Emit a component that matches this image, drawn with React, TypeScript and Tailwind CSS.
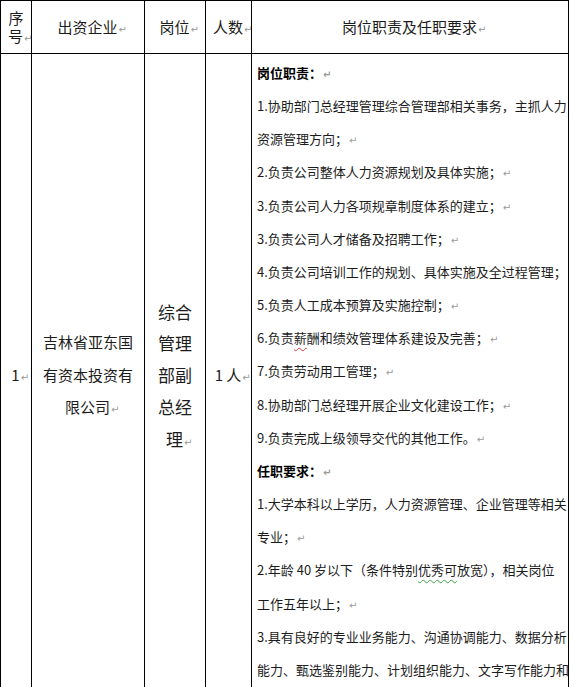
import React from "react";

const Mark = () => (
  <span className="inline-block w-0 whitespace-nowrap pl-[1px] align-baseline text-[10px] leading-none text-[#9a9a9a] font-['DejaVu_Sans',sans-serif]">
    ↵
  </span>
);

type Line = { text: React.ReactNode; bold?: boolean; mark?: boolean };

const lines: Line[] = [
  { text: "岗位职责：", bold: true, mark: true },
  { text: "1.协助部门总经理管理综合管理部相关事务，主抓人力" },
  { text: "资源管理方向；", mark: true },
  { text: "2.负责公司整体人力资源规划及具体实施；", mark: true },
  { text: "3.负责公司人力各项规章制度体系的建立；", mark: true },
  { text: "3.负责公司人才储备及招聘工作；", mark: true },
  { text: "4.负责公司培训工作的规划、具体实施及全过程管理；", mark: true },
  { text: "5.负责人工成本预算及实施控制；", mark: true },
  {
    text: (
      <>
        6.负责
        <span className="underline decoration-wavy decoration-[#d83a3a] decoration-1 underline-offset-[4px]">薪</span>
        酬和绩效管理体系建设及完善；
      </>
    ),
    mark: true,
  },
  { text: "7.负责劳动用工管理；", mark: true },
  { text: "8.协助部门总经理开展企业文化建设工作；", mark: true },
  { text: "9.负责完成上级领导交代的其他工作。", mark: true },
  { text: "任职要求：", bold: true, mark: true },
  { text: "1.大学本科以上学历，人力资源管理、企业管理等相关" },
  { text: "专业；", mark: true },
  {
    text: (
      <>
        2.年龄 40 岁以下（条件特别
        <span className="underline decoration-wavy decoration-[#3fa34d] decoration-1 underline-offset-[4px]">优秀可</span>
        放宽），相关岗位
      </>
    ),
  },
  { text: "工作五年以上；", mark: true },
  { text: "3.具有良好的专业业务能力、沟通协调能力、数据分析" },
  { text: "能力、甄选鉴别能力、计划组织能力、文字写作能力和" },
  { text: "语言表达能力；", mark: true },
];

export default function App() {
  return (
    <div className="min-h-screen bg-white font-['Noto_Sans_CJK_SC',sans-serif] text-[#1c1c1c]">
      <div className="grid w-[569px] grid-cols-[31px_113px_61px_46px_317px] border-l border-t border-black">
        {/* Header row */}
        <div className="flex h-[53px] flex-col items-center justify-center border-b border-r border-black text-[15px] leading-[18px]">
          <span>序</span>
          <span>
            号<Mark />
          </span>
        </div>
        <div className="flex h-[53px] items-center justify-center border-b border-r border-black text-[15px]">
          <span className="whitespace-nowrap">
            出资企业<Mark />
          </span>
        </div>
        <div className="flex h-[53px] items-center justify-center border-b border-r border-black text-[15px]">
          <span className="whitespace-nowrap">
            岗位<Mark />
          </span>
        </div>
        <div className="flex h-[53px] items-center justify-center border-b border-r border-black text-[15px]">
          <span className="whitespace-nowrap">
            人数<Mark />
          </span>
        </div>
        <div className="flex h-[53px] items-center justify-center border-b border-r border-black text-[15px]">
          <span className="whitespace-nowrap">
            岗位职责及任职要求<Mark />
          </span>
        </div>

        {/* Body row */}
        <div className="flex items-center justify-center border-b border-r border-black pb-[31px] text-[15px]">
          <span className="whitespace-nowrap">
            1<Mark />
          </span>
        </div>
        <div className="flex flex-col items-center justify-center border-b border-r border-black pb-[31px] text-[15px] leading-[32.5px]">
          <span className="whitespace-nowrap">吉林省亚东国</span>
          <span className="whitespace-nowrap">有资本投资有</span>
          <span className="whitespace-nowrap">
            限公司<Mark />
          </span>
        </div>
        <div className="flex flex-col items-center justify-center border-b border-r border-black pb-[31px] text-[17px] leading-[31.75px]">
          <span className="whitespace-nowrap">综合</span>
          <span className="whitespace-nowrap">管理</span>
          <span className="whitespace-nowrap">部副</span>
          <span className="whitespace-nowrap">总经</span>
          <span className="whitespace-nowrap">
            理<Mark />
          </span>
        </div>
        <div className="flex items-center justify-center border-b border-r border-black pb-[31px] text-[15px]">
          <span className="whitespace-nowrap">
            1 人<Mark />
          </span>
        </div>
        <div className="flex flex-col overflow-hidden border-b border-r border-black pb-[8px] pl-[5px] pt-[2px] text-[13px] leading-[33.15px]">
          {lines.map((l, i) => (
            <div
              key={i}
              className={
                l.bold
                  ? "whitespace-nowrap font-bold text-black"
                  : "whitespace-nowrap"
              }
            >
              {l.text}
              {l.mark ? <Mark /> : null}
            </div>
          ))}
        </div>
      </div>
    </div>
  );
}
